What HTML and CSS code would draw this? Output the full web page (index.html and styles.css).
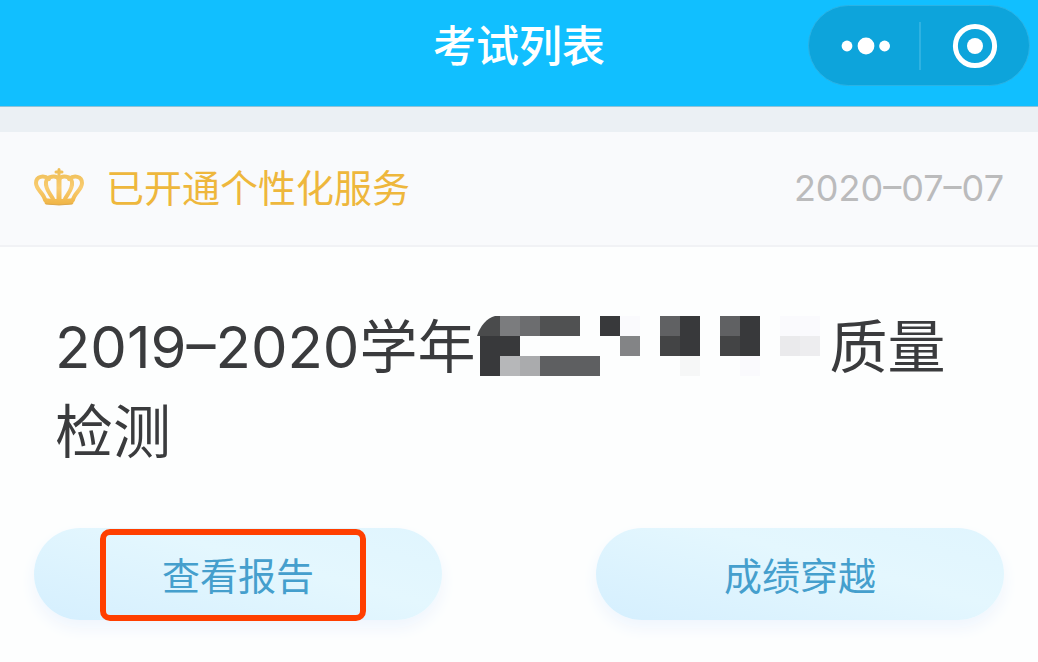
FILE: index.html
```html
<!DOCTYPE html>
<html lang="zh-CN">
<head>
<meta charset="utf-8">
<meta name="viewport" content="width=device-width, initial-scale=1">
<title>考试列表</title>
<link rel="stylesheet" href="styles.css">
</head>
<body>
<header class="navbar">
  <h1 class="navbar-title">考试列表</h1>
  <div class="capsule">
    <button class="capsule-button" type="button" aria-label="更多">
      <svg width="50" height="18" viewBox="0 0 50 18" fill="#fff"><circle cx="7" cy="9" r="5.4"/><circle cx="26" cy="9" r="8.4"/><circle cx="44.6" cy="9" r="5.4"/></svg>
    </button>
    <span class="capsule-divider"></span>
    <button class="capsule-button" type="button" aria-label="关闭">
      <svg width="46" height="46" viewBox="0 0 46 46"><circle cx="23" cy="23" r="19.6" fill="none" stroke="#fff" stroke-width="5"/><circle cx="23" cy="23" r="8" fill="#fff"/></svg>
    </button>
  </div>
</header>
<main class="exam">
  <div class="exam-status">
    <svg class="crown" width="50" height="40" viewBox="0 0 50 40" fill="none" stroke-linecap="round" stroke-linejoin="round">
      <defs><linearGradient id="gold" x1="0" y1="0" x2="0" y2="40" gradientUnits="userSpaceOnUse"><stop offset="0" stop-color="#edbd55"/><stop offset=".5" stop-color="#f9cc70"/><stop offset="1" stop-color="#eeb03d"/></linearGradient></defs>
      <g stroke="url(#gold)" stroke-width="4">
        <path d="M11 32C10 25 2 22 2 15C2 8 10 7 15 11"/>
        <path d="M39 32C40 25 48 22 48 15C48 8 40 7 35 11"/>
        <path d="M19 31C16 25 11 21 12 14C13 8 22 7 25 11C28 7 37 8 38 14C39 21 34 25 31 31"/>
        <path d="M25 10V31" stroke-width="5"/>
        <path d="M25 1.500V7M22 4H28" stroke-width="3"/>
      </g>
      <path d="M9 30Q25 32 41 30L39 36Q25 38 11 36Z" fill="url(#gold)"/>
      <path d="M12 36Q25 38 38 36" stroke="#dda84c" stroke-width="1"/>
    </svg>
    <span class="exam-service">已开通个性化服务</span>
    <time class="exam-date" datetime="2020-07-07">2020–07–07</time>
  </div>
  <h2 class="exam-title">2019–2020学年<svg class="mosaic" width="352" height="60" viewBox="0 0 352 60" shape-rendering="crispEdges" aria-hidden="true">
      <path d="M0 20C3 10 10 2 18 0H24V20Z" fill="#4a4b4c" shape-rendering="auto"/>
      <path d="M23 0h20v20h-20z" fill="#7b7c7e"/>
      <path d="M43 0h20v20h-20z" fill="#6c6d6f"/>
      <path d="M63 0h40v20h-40z" fill="#505152"/>
      <path d="M3 20h40v20h-20v20h-20zM123 0h20v20h-20zM203 0h20v40h-20zM263 0h20v40h-20z" fill="#38393b"/>
      <path d="M143 20h20v20h-20z" fill="#838486"/>
      <path d="M183 0h20v20h-20zM243 0h20v20h-20z" fill="#606163"/>
      <path d="M183 20h20v20h-20zM243 20h20v20h-20z" fill="#434445"/>
      <path d="M23 40h20v20h-20z" fill="#b6b7b9"/>
      <path d="M43 40h20v20h-20z" fill="#aaabad"/>
      <path d="M63 40h60v20h-60z" fill="#5e5f61"/>
      <path d="M143 0h20v20h-20zM303 0h40v20h-40zM263 40h20v20h-20z" fill="#fafafd"/>
      <path d="M203 40h20v20h-20z" fill="#f6f7f7"/>
      <path d="M303 20h20v20h-20z" fill="#eaeaec"/>
      <path d="M323 20h20v20h-20z" fill="#ededef"/>
    </svg>质量<wbr>检测</h2>
  <div class="exam-actions">
    <button class="action marked" type="button">查看报告</button>
    <button class="action" type="button">成绩穿越</button>
  </div>
</main>
</body>
</html>
```

FILE: styles.css
```css
* {
  box-sizing: border-box;
}

body {
  margin: 0;
  background: #fdfefe;
  color: #3a3b3d;
  font-family: Inter, "Noto Sans CJK SC", sans-serif;
}

button {
  border: 0;
  padding: 0;
  font: inherit;
  cursor: pointer;
}

.navbar {
  display: grid;
  grid-template-columns: 1fr auto 1fr;
  align-items: start;
  min-height: 107px;
  padding: 5px 8px;
  border-bottom: 1px solid #8fc3d9;
  background: #11bfff;
}

.navbar-title {
  grid-column: 2;
  margin: 0;
  color: #fff;
  font-size: 43px;
  font-weight: 500;
  line-height: 82px;
}

.capsule {
  display: grid;
  grid-template-columns: 1fr 2px 1fr;
  align-items: center;
  justify-self: end;
  width: 222px;
  height: 81px;
  padding-left: 2px;
  border: 1px solid #2bb2e4;
  border-radius: 41px;
  background: #0da4db;
}

.capsule-button {
  display: grid;
  place-items: center;
  height: 78px;
  background: none;
}

.capsule-divider {
  height: 48px;
  background: #2fb2e1;
}

.exam {
  border-top: 25px solid #ebf0f4;
}

.exam-status {
  display: flex;
  align-items: center;
  min-height: 115px;
  padding: 0 34px 2px;
  border-bottom: 2px solid #f1f2f5;
  background: #f9fafc;
  font-size: 38px;
  line-height: 56px;
}

.crown {
  flex: none;
  margin-right: 22px;
}

.exam-service {
  color: #eeb73c;
}

.exam-date {
  margin-left: auto;
  color: #bbbbbc;
  font-size: 36px;
}

.exam-title {
  margin: 0;
  padding: 58px 54px 0 55px;
  font-size: 58px;
  font-weight: 400;
  line-height: 85px;
}

.mosaic {
  margin-left: 2px;
  vertical-align: -8px;
}

.exam-actions {
  display: grid;
  grid-template-columns: 1fr 1fr;
  gap: 154px;
  padding: 53px 34px 42px;
}

.action {
  position: relative;
  height: 92px;
  padding-bottom: 2px;
  border-radius: 46px;
  background: linear-gradient(15deg, #d5effe, #e4f7fe 60%, #e0f5fe);
  box-shadow: 0 8px 16px #eff5fd;
  color: #459fcd;
  font-size: 38px;
}

.marked::after {
  content: "";
  position: absolute;
  inset: 1px 76px -1px 66px;
  border: 6px solid #ff3f00;
  border-radius: 10px;
}
```
